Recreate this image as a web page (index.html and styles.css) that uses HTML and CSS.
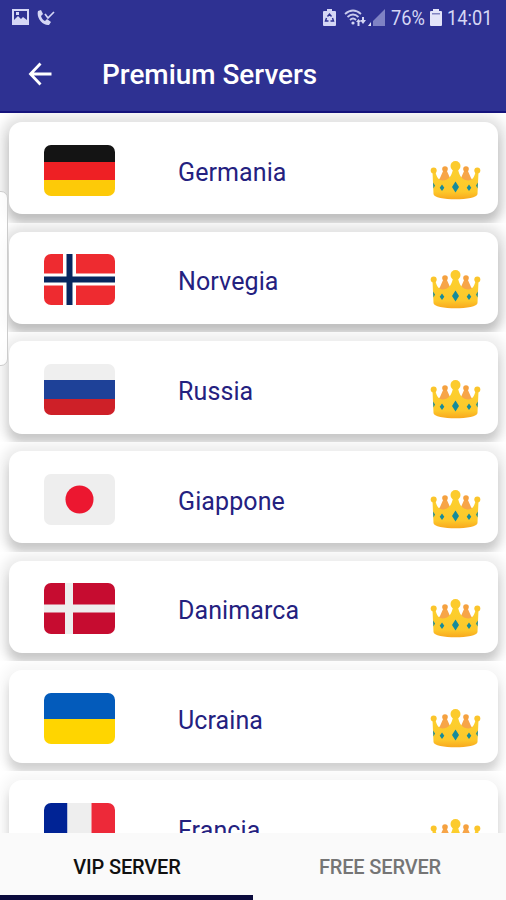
FILE: index.html
```html
<!DOCTYPE html>
<html lang="it">
<head>
<meta charset="utf-8">
<title>Premium Servers</title>
<link rel="stylesheet" href="styles.css">
</head>
<body>
<svg class="defs" width="0" height="0">
  <defs>
    <linearGradient id="gold" x1="0" y1="0" x2="0" y2="1">
      <stop offset="0" stop-color="#fcd02e"/><stop offset=".75" stop-color="#fdc82a"/><stop offset="1" stop-color="#f8a81e"/>
    </linearGradient>
    <symbol id="crown" viewBox="0 0 51 39">
      <path fill="#f7a548" d="M5 24 10 17 13.500 9h3L20 17h11l3.500-8h3L41 17l5 7-3 8H8z"/>
      <circle cx="15" cy="8" r="2.800" fill="#f5a13f"/><circle cx="36" cy="8" r="2.800" fill="#f5a13f"/>
      <path fill="url(#gold)" d="M2.500 11h3c1 5 3 8 7 8.500 6 0 9-4 10.500-11.500h5c1.500 7.500 4.500 11.500 10.500 11.500 4-.5 6-3.500 7-8.500h3l-1 22c0 7-44 7-44 0z"/>
      <circle cx="3.700" cy="9.500" r="3" fill="#fbc52b"/><circle cx="47.300" cy="9.500" r="3" fill="#fbc52b"/>
      <circle cx="25.500" cy="5" r="5" fill="#fccb2c"/>
      <path fill="#168b9b" d="m25.500 20.500 3.500 5.500-3.500 5.500-3.500-5.500zM12 23.500l2.300 3.300L12 30l-2.300-3.200zM39 23.500l2.300 3.300L39 30l-2.300-3.200zM3 21.500l2 3-1.500 3zM48 21.500l-2 3 1.500 3z"/>
    </symbol>
  </defs>
</svg>
<div class="screen">
  <header class="top">
    <div class="status">
      <div class="status-left">
        <svg width="17" height="17" viewBox="0 0 17 17"><path fill="#d5d7f5" fill-rule="evenodd" d="M0 0h17v16H0zM2 2v9l4-4 3 3 2-2 4 3V2z"/><path fill="#d5d7f5" d="M4 3h3v3H4z"/></svg>
        <svg width="18" height="17" viewBox="0 0 18 17"><path fill="#d5d7f5" d="M1 2 4 1l2 4-2 2c1 3 2 4 4 5l2-2 4 3-2 3C6 17-1 9 1 2z"/><path fill="none" stroke="#d5d7f5" stroke-width="1.700" d="m8 5 3 4 6-6"/></svg>
      </div>
      <div class="status-right">
        <svg width="13" height="17" viewBox="0 0 13 17"><path fill="#d5d7f5" d="M4 0h5v2h3q1 0 1 1v13q0 1-1 1H1q-1 0-1-1V3q0-1 1-1h3z"/><path fill="none" stroke="#2e3192" stroke-width="1.400" d="M4.500 7.500 6.500 5l2 2.500M9.500 9l1 3h-3M5.500 12h-3l1-3"/></svg>
        <svg class="wifi" width="22" height="18" viewBox="0 0 22 18"><path fill="none" stroke="#c9cbed" stroke-width="1.800" d="M1 5q8-7 16 0M3.500 8q5.500-5 11 0M6 11q3-3 6 0"/><circle cx="9" cy="14" r="1.600" fill="#d5d7f5"/><path fill="#d5d7f5" d="m14.500 10-2.500 3h1.500v4h2v-4H17zM18 8h2v3h2l-3 4-3-4h2z"/></svg>
        <svg class="signal" width="17" height="17" viewBox="0 0 17 17"><path fill="#7f82c4" d="M17 0v17H5V12z"/><path fill="#e6e7fa" d="M3 13v4H0z"/></svg>
        <span class="pct"><span class="squeeze">76%</span></span>
        <svg class="batt" width="12" height="17" viewBox="0 0 12 17"><path fill="#e3e4f8" d="M3 0h6v2h2q1 0 1 1v13q0 1-1 1H1q-1 0-1-1V3q0-1 1-1h2z"/><path fill="#8083c0" d="M2 4h8v1.500H2z"/></svg>
        <span class="clock"><span class="squeeze">14:01</span></span>
      </div>
    </div>
    <div class="bar">
      <svg class="back" width="24" height="24" viewBox="0 0 24 24"><path fill="none" stroke="#fff" stroke-width="2.800" d="M23.500 12H2.500M12.500 1.500 2.500 12l10 10.500"/></svg>
      <h1>Premium Servers</h1>
    </div>
  </header>
  <main class="list">
    <div class="row near"><div class="card">
      <svg class="flag" viewBox="0 0 71 51"><path fill="#141414" d="M0 0h71v17H0z"/><path fill="#ee2024" d="M0 17h71v18H0z"/><path fill="#fdca08" d="M0 35h71v16H0z"/></svg>
      <span class="name">Germania</span><svg class="crown"><use href="#crown"/></svg></div></div>
    <div class="row near"><div class="card">
      <svg class="flag" viewBox="0 0 71 51"><path fill="#ee2b30" d="M0 0h71v51H0z"/><path fill="#fff" d="M19 0h13v51H19zM0 19.500h71v12H0z"/><path fill="#06265f" d="M22.500 0h6v51h-6zM0 22.500h71v6H0z"/></svg>
      <span class="name">Norvegia</span><svg class="crown"><use href="#crown"/></svg></div></div>
    <div class="row"><div class="card">
      <svg class="flag" viewBox="0 0 71 51"><path fill="#efefef" d="M0 0h71v16H0z"/><path fill="#1e4198" d="M0 16h71v19H0z"/><path fill="#ce2028" d="M0 35h71v16H0z"/></svg>
      <span class="name">Russia</span><svg class="crown"><use href="#crown"/></svg></div></div>
    <div class="row"><div class="card">
      <svg class="flag" viewBox="0 0 71 51"><path fill="#eee" d="M0 0h71v51H0z"/><circle cx="35.500" cy="25.500" r="14" fill="#ec1730"/></svg>
      <span class="name">Giappone</span><svg class="crown"><use href="#crown"/></svg></div></div>
    <div class="row"><div class="card">
      <svg class="flag" viewBox="0 0 71 51"><path fill="#c60c30" d="M0 0h71v51H0z"/><path fill="#eee" d="M21 0h8v51h-8zM0 21.500h71v8H0z"/></svg>
      <span class="name">Danimarca</span><svg class="crown"><use href="#crown"/></svg></div></div>
    <div class="row far"><div class="card">
      <svg class="flag" viewBox="0 0 71 51"><path fill="#035bbb" d="M0 0h71v26H0z"/><path fill="#ffd500" d="M0 26h71v25H0z"/></svg>
      <span class="name">Ucraina</span><svg class="crown"><use href="#crown"/></svg></div></div>
    <div class="row far"><div class="card">
      <svg class="flag" viewBox="0 0 71 51"><path fill="#002395" d="M0 0h23.500v51H0z"/><path fill="#eee" d="M23.500 0h24v51h-24z"/><path fill="#ed2939" d="M47.500 0H71v51H47.500z"/></svg>
      <span class="name">Francia</span><svg class="crown"><use href="#crown"/></svg></div></div>
    <div class="edge-handle"></div>
  </main>
  <nav class="tabs">
    <div class="tab active">VIP SERVER</div>
    <div class="tab">FREE SERVER</div>
  </nav>
</div>
</body>
</html>
```

FILE: styles.css
```css
* { box-sizing: border-box; }
body { margin: 0; font-family: Roboto, "Liberation Sans", sans-serif; background: #fff; }
.defs { display: block; height: 0; }
.screen { width: 506px; height: 900px; display: flex; flex-direction: column; overflow: hidden; }
svg { display: block; flex: none; }
.top { height: 113px; flex: none; background: #2e3192; border-bottom: 2px solid #15137c; color: #fff; }
.status { height: 35px; display: flex; justify-content: space-between; padding: 0 13px 0 12px; color: #d5d7f5; font-size: 21px; }
.status-left, .status-right { display: flex; align-items: center; }
.status-left { gap: 8px; }
.wifi { margin-left: 8px; }
.signal { margin-left: 2px; }
.pct { margin-left: 6px; width: 34px; white-space: nowrap; }
.batt { margin-left: 5px; }
.clock { margin-left: 5px; width: 46px; white-space: nowrap; }
.squeeze { display: inline-block; transform: scaleX(.87); transform-origin: 0 50%; }
.bar { height: 78px; display: flex; align-items: center; padding-left: 28px; }
h1 { margin: 2px 0 0 50px; font-size: 27.900px; line-height: 34px; font-weight: 500; }
.list { position: relative; flex: 1; min-height: 0; overflow: hidden; }
.row { --ambient: .08; height: 109.700px; padding: 9px 8px 8.300px 9px; overflow: hidden; }
.near { --ambient: .12; }
.far { --ambient: .04; }
.card { height: 92.400px; border-radius: 13px; background: #fff; display: flex; align-items: center; padding: 4px 17px 0 35px; box-shadow: 0 9px 10px rgba(0, 0, 0, .15), 0 2px 12px 8px rgba(0, 0, 0, var(--ambient)); }
.flag { width: 71px; height: 51px; border-radius: 7px; }
.name { margin: 5px 0 0 63px; flex: 1; font-size: 25px; line-height: 32px; letter-spacing: .1px; color: #24217f; }
.crown { width: 51px; height: 39px; margin-top: 20px; }
.edge-handle { position: absolute; left: -10px; top: 78px; width: 18px; height: 175px; border: 1px solid #ccc; border-radius: 7px; background: rgba(255, 255, 255, .85); }
.tabs { height: 67px; flex: none; display: flex; background: #fafafa; }
.tab { flex: 1; display: flex; align-items: center; justify-content: center; font-size: 20px; letter-spacing: -.15px; font-weight: 500; color: #757575; border-bottom: 5px solid transparent; padding: 6px 0 0 1px; }
.active { color: #101010; border-bottom-color: #0b0b3d; }
```
